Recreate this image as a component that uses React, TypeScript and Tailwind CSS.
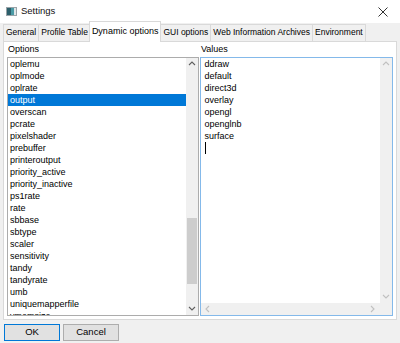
const options = [
  "oplemu",
  "oplmode",
  "oplrate",
  "output",
  "overscan",
  "pcrate",
  "pixelshader",
  "prebuffer",
  "printeroutput",
  "priority_active",
  "priority_inactive",
  "ps1rate",
  "rate",
  "sbbase",
  "sbtype",
  "scaler",
  "sensitivity",
  "tandy",
  "tandyrate",
  "umb",
  "uniquemapperfile",
  "vmemsize",
];

const values = ["ddraw", "default", "direct3d", "overlay", "opengl", "openglnb", "surface"];

const tabs = ["General", "Profile Table", "Dynamic options", "GUI options", "Web Information Archives", "Environment"];

function Chevron({ dir, color }: { dir: "up" | "down" | "left" | "right"; color: string }) {
  const pts = {
    up: "1,5 4,2 7,5",
    down: "1,2 4,5 7,2",
    left: "5,1 2,4 5,7",
    right: "2,1 5,4 2,7",
  }[dir];
  return (
    <svg width="8" height="8" viewBox="0 0 8 8">
      <polyline points={pts} fill="none" stroke={color} strokeWidth="1.1" />
    </svg>
  );
}

function App() {
  return (
    <div className="flex h-[343px] w-[400px] flex-col overflow-hidden bg-[#f0f0f0] font-['Liberation_Sans',Arial,sans-serif] text-[9px] text-black">
      {/* title bar */}
      <div className="flex h-[23px] items-center bg-white pl-[6px]">
        <svg width="11" height="9" viewBox="0 0 11 9">
          <rect x="0.5" y="0.5" width="10" height="8" fill="#fff" stroke="#9aa3a8" />
          <rect x="1" y="1" width="4" height="7" fill="#2c5f6b" />
          <rect x="5" y="1" width="3" height="7" fill="#4a9aa5" />
          <rect x="8" y="1" width="2" height="7" fill="#dfe6e8" />
        </svg>
        <span className="ml-[4px] text-[9.5px] text-[#111]">Settings</span>
        <div className="ml-auto mr-[10px] flex h-[23px] w-[14px] items-center justify-center">
          <svg width="10" height="10" viewBox="0 0 10 10">
            <path d="M0.5 0.5 L9.5 9.5 M9.5 0.5 L0.5 9.5" stroke="#333" strokeWidth="1" />
          </svg>
        </div>
      </div>

      {/* tabs */}
      <div className="flex h-[18px] items-end px-[3px] text-[8.5px]">
        {tabs.map((t) =>
          t === "Dynamic options" ? (
            <div
              key={t}
              className="relative z-10 -mx-[1px] -mb-px flex h-[21px] items-center border border-b-0 border-[#d9d9d9] bg-white px-[2px] text-[9px]"
            >
              {t}
            </div>
          ) : (
            <div
              key={t}
              className="-mr-px flex h-[17px] items-center border border-b-0 border-[#d9d9d9] bg-[#f0f0f0] px-[2px] pb-[1px]"
            >
              {t}
            </div>
          )
        )}
      </div>

      {/* panel */}
      <div className="mx-[3px] flex h-[279px] flex-col border border-[#d9d9d9] bg-white px-[3px]">
        <div className="flex h-[15px] items-center gap-[1px]">
          <div className="w-[192px] pl-[1px]">Options</div>
          <div className="pl-[1px]">Values</div>
        </div>
        <div className="flex h-[259px] gap-[1px]">
          {/* options list */}
          <div className="flex w-[192px] border border-[#acacac]">
            <div className="flex-1 overflow-hidden">
              {options.map((o) => (
                <div
                  key={o}
                  className={`h-[12px] whitespace-nowrap pl-[2px] leading-[12px] ${
                    o === "output" ? "bg-[#0078d7] text-white" : ""
                  }`}
                >
                  {o}
                </div>
              ))}
            </div>
            <div className="flex w-[12px] flex-col bg-[#f0f0f0]">
              <div className="flex h-[12px] items-center justify-center">
                <Chevron dir="up" color="#606060" />
              </div>
              <div className="flex-1 px-[1px]">
                <div className="mt-[148px] h-[66px] bg-[#cdcdcd]" />
              </div>
              <div className="flex h-[12px] items-center justify-center">
                <Chevron dir="down" color="#606060" />
              </div>
            </div>
          </div>

          {/* values box */}
          <div className="flex w-[194px] flex-col border border-[#84b9ea]">
            <div className="flex flex-1">
              <div className="flex-1 pl-[4px]">
                {values.map((v) => (
                  <div key={v} className="h-[12px] leading-[12px]">
                    {v}
                  </div>
                ))}
                <div className="h-[12px] w-px bg-black" />
              </div>
              <div className="flex w-[12px] flex-col justify-between bg-[#f0f0f0]">
                <div className="flex h-[12px] items-center justify-center">
                  <Chevron dir="up" color="#c0c0c0" />
                </div>
                <div className="flex h-[12px] items-center justify-center">
                  <Chevron dir="down" color="#c0c0c0" />
                </div>
              </div>
            </div>
            <div className="flex h-[12px]">
              <div className="flex flex-1 items-center justify-between bg-[#f0f0f0] px-[3px]">
                <Chevron dir="left" color="#c0c0c0" />
                <Chevron dir="right" color="#c0c0c0" />
              </div>
              <div className="w-[12px] bg-[#f0f0f0]" />
            </div>
          </div>
        </div>
      </div>

      {/* buttons */}
      <div className="flex gap-[3px] pl-[4px] pt-[4px]">
        <button className="h-[17px] w-[56px] border border-[#0078d7] bg-[#e1e1e1] text-[9.5px]">OK</button>
        <button className="h-[17px] w-[56px] border border-[#adadad] bg-[#e1e1e1] text-[9.5px]">Cancel</button>
      </div>
    </div>
  );
}

export default App;
